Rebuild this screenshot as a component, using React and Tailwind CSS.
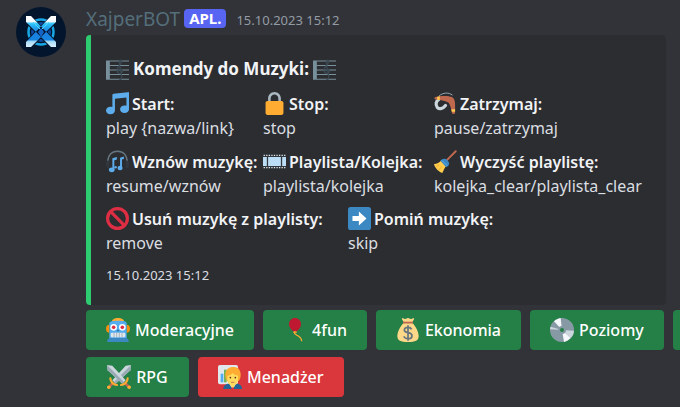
import React from "react";

function Glyph({ className = "size-[23px]", children }) {
  return (
    <svg viewBox="0 0 36 36" className={`${className} shrink-0`} aria-hidden="true">
      {children}
    </svg>
  );
}

function Avatar() {
  return (
    <svg viewBox="0 0 50 50" className="size-[50px] shrink-0" aria-hidden="true">
      <defs>
        <linearGradient id="blade" gradientUnits="userSpaceOnUse" x1="25" y1="9" x2="25" y2="41">
          <stop offset="0" stopColor="#fff" />
          <stop offset=".17" stopColor="#f4fbff" />
          <stop offset=".24" stopColor="#2cc4fa" />
          <stop offset=".5" stopColor="#1b7fe0" />
          <stop offset=".74" stopColor="#1685e0" />
          <stop offset=".8" stopColor="#a8dcfa" />
          <stop offset="1" stopColor="#e2f4ff" />
        </linearGradient>
      </defs>
      <circle cx="25" cy="25" r="25" fill="#03152d" />
      <circle cx="25" cy="25" r="12.5" fill="none" stroke="#18a8e6" strokeWidth="2.500" />
      <circle cx="25" cy="25" r="8.5" fill="none" stroke="#0b4a9e" strokeWidth="3" />
      <path d="M12 12l26 26M38 12L12 38" stroke="#03152d" strokeWidth="9" />
      <path d="M10 9h5l25 26v5h-5L10 15zM40 9h-5L10 35v5h5l25-25z" fill="url(#blade)" />
      <path d="M17 15l8 8 8-8" fill="none" stroke="#57d8ff" strokeWidth="1" />
      <path d="M25 21l3 4-3 5-3-5z" fill="#1565c8" />
    </svg>
  );
}

function Score() {
  return (
    <Glyph>
      <path fill="#78909c" d="M0 4h6v30H0zM6 4h30v1.600H6zM6 11h30v1.600H6zM6 18h30v1.600H6zM6 25h30v1.600H6zM6 32.400h30V34H6z" />
      <path fill="none" stroke="#3b4953" strokeWidth="2" d="M21 33c3 1 4-1 3.500-4L21 9c-.5-4 2-7 3-5s-1 6-4 9-4 7-1 10 8 0 6-4-6-1-5 2" />
    </Glyph>
  );
}

const NOTES =
  "M34.209.206L11.791 2.793C10.806 2.907 10 3.811 10 4.803v18.782C9.090 23.214 8.075 23 7 23c-3.865 0-7 2.685-7 6 0 3.314 3.135 6 7 6s7-2.686 7-6V10.539l18-2.077v13.124c-.91-.372-1.925-.586-3-.586-3.865 0-7 2.685-7 6 0 3.314 3.135 6 7 6s7-2.686 7-6V1.803c0-.992-.806-1.710-1.791-1.597z";

function Notes() {
  return (
    <Glyph>
      <path fill="#5dadec" d={NOTES} />
    </Glyph>
  );
}

function Lock() {
  return (
    <Glyph>
      <path fill="#aab8c2" d="M18 0C12.500 0 8 4.500 8 10v8h4v-8c0-3.300 2.700-6 6-6s6 2.700 6 6v8h4v-8c0-5.500-4.500-10-10-10z" />
      <path fill="#ffac33" d="M32 33c0 1.700-1.300 3-3 3H7c-1.700 0-3-1.300-3-3V17c0-1.700 1.300-3 3-3h22c1.700 0 3 1.300 3 3z" />
    </Glyph>
  );
}

function Boomerang() {
  return (
    <Glyph>
      <path fill="none" stroke="#99aab5" strokeWidth="1.500" d="M8 6C14 1 23 0 29 5" />
      <path fill="none" stroke="#ccd6dd" strokeWidth="5" strokeLinecap="round" d="M8 11C3 14 2 20 5 24c4 4 9 2 13-3" />
      <path fill="#c1694f" d="M2 8C9 6 22 5 28 8c4 2 5 7 5 12v13c-1 2-4 2-5 0-1-6-2-12-5-16-3-3-13-5-20-5-3-1-3-3-1-4z" />
      <path fill="#ffcc4d" d="M5 7.500l4-1v6l-4-.500zM27 27h6v4h-5z" />
    </Glyph>
  );
}

function Headphones() {
  return (
    <Glyph>
      <path fill="none" stroke="#66757f" strokeWidth="2.500" d="M3 19C3 8 9 2 18 2s15 6 15 17" />
      <path fill="#31373d" d="M5 16v13c-3 0-5-2-5-5v-3c0-3 2-5 5-5zM31 16v13c3 0 5-2 5-5v-3c0-3-2-5-5-5z" />
      <g fill="#5dadec">
        <ellipse cx="9" cy="31" rx="4.500" ry="3.800" />
        <ellipse cx="22" cy="28" rx="4" ry="3.500" />
        <path d="M10 13l7-2v4l-4 1v15h-3zM22 12l6-2v4l-3 1v13h-3z" />
        <ellipse cx="15" cy="27" rx="2" ry="2" />
      </g>
    </Glyph>
  );
}

function Film() {
  return (
    <Glyph>
      <path fill="#31373d" d="M0 7h36v22H0z" />
      <path fill="#bbddf5" d="M8 11h20v14H8zM0 11h6v14H0zM30 11h6v14h-6z" />
      <path fill="none" stroke="#e1e8ed" strokeWidth="2" strokeDasharray="2 2" d="M1 8.500h34M1 27.500h34" />
    </Glyph>
  );
}

function Broom() {
  return (
    <Glyph>
      <path stroke="#c1694f" strokeWidth="3" strokeLinecap="round" d="M34 2L19 17" />
      <path fill="#ffcc4d" d="M0 22c5 0 8-2 11-5l8 8c-3 4-4 7-6 11-5-1-12-8-13-14z" />
      <path fill="#3b88c3" d="M12 15c3-2 6-2 9 1s4 6 1 9l-3 2L10 17z" />
      <path fill="none" stroke="#5dadec" strokeWidth="1.500" d="M12 16l9 9" />
      <path fill="none" stroke="#f4900c" d="M4 26l4-3M8 31l4-5" />
    </Glyph>
  );
}

function Prohibited() {
  return (
    <Glyph>
      <circle cx="18" cy="18" r="15.500" fill="none" stroke="#dd2e44" strokeWidth="5" />
      <path stroke="#dd2e44" strokeWidth="5" d="M7 7l22 22" />
    </Glyph>
  );
}

function ArrowRight() {
  return (
    <Glyph>
      <rect width="36" height="36" rx="4" fill="#3b88c3" />
      <path fill="#fff" d="M17 7l12 11-12 11v-7H7v-8h10z" />
    </Glyph>
  );
}

function Robot() {
  return (
    <Glyph className="size-6">
      <path fill="#f4900c" d="M0 16c0-4 2-6 5-6v12c-3 0-5-2-5-6zM36 16c0-4-2-6-5-6v12c3 0 5-2 5-6z" />
      <path fill="#ffac33" d="M9 5c0-3 4-5 9-5s9 2 9 5z" />
      <path fill="#55acee" d="M5 8c0-3 4-4 13-4s13 1 13 4v22H5z" />
      <path fill="#3b88c3" d="M5 30h26l3 3v3H2v-3z" />
      <circle cx="11.500" cy="14" r="5" fill="#fff" />
      <circle cx="24.500" cy="14" r="5" fill="#fff" />
      <circle cx="11.500" cy="14" r="2.700" fill="#dd2e44" />
      <circle cx="24.500" cy="14" r="2.700" fill="#dd2e44" />
      <path fill="#269" d="M16 20l2-3 2 3z" />
      <rect x="7" y="22" width="22" height="7" rx="2" fill="#e1e8ed" />
      <path stroke="#8899a6" d="M12 22v7M16 22v7M20 22v7M24 22v7" />
    </Glyph>
  );
}

function Balloon() {
  return (
    <Glyph className="size-6">
      <path fill="none" stroke="#ffac33" strokeWidth="1.800" d="M18 20c-3 4 2 5 5 7s5 3 5 8" />
      <path fill="#be1931" d="M27 9c0 5-4 10-9 12C13 19 9 14 9 9s4-9 9-9 9 4 9 9z" />
      <path fill="#ffac33" d="M16 20h4l1 2h-6z" />
    </Glyph>
  );
}

function MoneyBag() {
  return (
    <Glyph className="size-6">
      <path fill="#fdd888" d="M12 7L9 2c-1-2 1-2 3-1s3 0 6-1c3 1 4 2 6 1s4-1 3 1l-3 5c6 5 10 14 10 20 0 7-5 9-16 9S2 34 2 27C2 21 6 12 12 7z" />
      <path fill="#bf6952" d="M10.500 5.500h15v2.800h-15z" />
      <path fill="none" stroke="#67757f" strokeWidth="2.600" d="M23.500 17c-1-2-3-3-5.500-3-3 0-5.500 1.500-5.500 4s2 3.300 5.500 4 6 1.600 6 4.500-3 4.500-6 4.500-5-1-6.500-3.500M18 11v23" />
    </Glyph>
  );
}

function Disc() {
  return (
    <Glyph className="size-6">
      <circle cx="18" cy="18" r="18" fill="#8899a6" />
      <path fill="#f5f8fa" d="M18 18L6 5c3-3 6-4 10-5zM18 18l3 18c4-1 7-3 10-6z" />
      <path fill="#ccd6dd" d="M18 18L0 17c0-1 0-2 1-4zM18 18l13 12c3-3 5-7 5-11z" />
      <circle cx="18" cy="18" r="6" fill="#8899a6" />
      <circle cx="18" cy="18" r="3" fill="#248046" />
    </Glyph>
  );
}

function Sword() {
  return (
    <>
      <path fill="#ccd6dd" d="M0 0l8 1 20 22-5 5L1 8z" />
      <path fill="#99aab5" d="M0 0l25.500 25.500L23 28 1 8z" />
      <path stroke="#bf6952" strokeWidth="4" d="M26 26l7 7" />
      <path stroke="#ffac33" strokeWidth="3.200" strokeLinecap="round" d="M31 20c0 5-5 10-10 10" fill="none" />
      <circle cx="33.300" cy="33.300" r="2.700" fill="#ffac33" />
    </>
  );
}

function Swords() {
  return (
    <Glyph className="size-6">
      <g transform="translate(36 0) scale(-1 1)">
        <Sword />
      </g>
      <Sword />
    </Glyph>
  );
}

function Manager() {
  return (
    <Glyph className="size-6">
      <rect width="30" height="29" rx="3" fill="#e1e8ed" />
      <path fill="#55acee" d="M4 13h4v13H4z" />
      <path fill="#77b255" d="M9 7h4v19H9z" />
      <path fill="#269" d="M8 36c0-6 4-8 9-8h10c5 0 9 2 9 8z" />
      <path fill="#fff" d="M17 28h10l-5 8z" />
      <path fill="#dd2e44" d="M21 31h2l1 5h-4z" />
      <path fill="#ffac33" d="M11 15C11 7 16 3 23 3c7-1 11 5 11 11 0 5-1 8-3 10H14c-2-2-3-5-3-9z" />
      <path fill="#ffdc5d" d="M14 16c4 0 6-2 8-4 2 3 5 3 8 4v6c0 5-3 7-5 8v2l-3 2-3-2v-2c-3-1-5-4-5-8z" />
      <circle cx="18.500" cy="19" r="1.200" fill="#662113" />
      <circle cx="26" cy="19" r="1.200" fill="#662113" />
      <path stroke="#c1694f" strokeWidth="1.300" d="M19.500 26h5" />
    </Glyph>
  );
}

function Field({ icon, name, value }) {
  return (
    <div className="whitespace-nowrap">
      <dt className="flex h-[25px] items-center gap-[3px] font-semibold text-[#f2f3f5]">
        {icon}
        {name}
      </dt>
      <dd className="h-[25px] leading-[25px] text-[#dbdee1]">{value}</dd>
    </div>
  );
}

function ActionButton({ icon, children, danger, label }) {
  return (
    <button
      type="button"
      aria-label={label}
      className={`flex h-10 min-w-[103px] shrink-0 items-center justify-center gap-[5px] rounded px-5 font-medium text-white ${danger ? "bg-[#da373c]" : "bg-[#248046]"}`}
    >
      {icon}
      {children}
    </button>
  );
}

export default function App() {
  return (
    <main className="flex min-h-screen gap-5 overflow-hidden bg-[#313338] pb-[10px] pl-4 pt-[7px] font-['Noto_Sans',sans-serif] text-[16px]">
      <Avatar />
      <article className="min-w-0 flex-1">
        <header className="flex h-7 items-start gap-1 pb-1">
          <h1 className="text-[19px] leading-6 text-[#546e7a]">XajperBOT</h1>
          <span className="mt-[2px] rounded bg-[#5865f2] px-[5px] text-[15px] font-bold leading-[19px] text-white">APL.</span>
          <time className="ml-[6px] text-[13px] leading-[26px] text-[#949ba4]">15.10.2023 15:12</time>
        </header>

        <section className="mr-[14px] rounded border-l-[5px] border-[#2ecc71] bg-[#2b2d31] py-5 pl-[15px] pr-5">
          <h2 className="flex h-7 items-center gap-1 whitespace-nowrap text-[17px] font-bold text-[#f2f3f5]">
            <Score />
            Komendy do Muzyki:
            <Score />
          </h2>
          <dl className="mt-2 grid grid-cols-[157px_171px_1fr] gap-y-2">
            <Field icon={<Notes />} name="Start:" value="play {nazwa/link}" />
            <Field icon={<Lock />} name="Stop:" value="stop" />
            <Field icon={<Boomerang />} name="Zatrzymaj:" value="pause/zatrzymaj" />
            <Field icon={<Headphones />} name="Wznów muzykę:" value="resume/wznów" />
            <Field icon={<Film />} name="Playlista/Kolejka:" value="playlista/kolejka" />
            <Field icon={<Broom />} name="Wyczyść playlistę:" value="kolejka_clear/playlista_clear" />
          </dl>
          <dl className="mt-[7px] grid grid-cols-[242px_1fr]">
            <Field icon={<Prohibited />} name="Usuń muzykę z playlisty:" value="remove" />
            <Field icon={<ArrowRight />} name="Pomiń muzykę:" value="skip" />
          </dl>
          <footer className="mt-[9px] text-[13px] leading-5 text-[#dbdee1]">
            <time>15.10.2023 15:12</time>
          </footer>
        </section>

        <div className="mt-[5px] flex gap-[9px]">
          <ActionButton icon={<Robot />}>Moderacyjne</ActionButton>
          <ActionButton icon={<Balloon />}>4fun</ActionButton>
          <ActionButton icon={<MoneyBag />}>Ekonomia</ActionButton>
          <ActionButton icon={<Disc />}>Poziomy</ActionButton>
          <ActionButton label="Więcej" />
        </div>
        <div className="mt-[7px] flex gap-[9px]">
          <ActionButton icon={<Swords />}>RPG</ActionButton>
          <ActionButton icon={<Manager />} danger>Menadżer</ActionButton>
        </div>
      </article>
    </main>
  );
}
